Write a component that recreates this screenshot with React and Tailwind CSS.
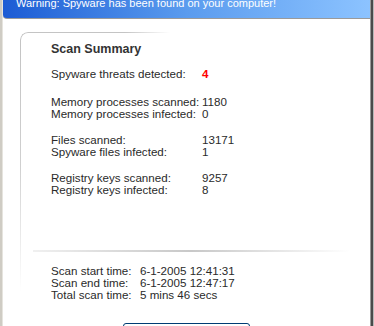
import React from "react";

const Row = ({ label, value, valueClass = "" }) => (
  <div className="flex h-[12px] leading-[12px] whitespace-nowrap">
    <span className="w-[151px] shrink-0">{label}</span>
    <span className={valueClass}>{value}</span>
  </div>
);

const TimeRow = ({ label, value }) => (
  <div className="flex h-[12px] leading-[12px] whitespace-nowrap">
    <span className="w-[89px] shrink-0">{label}</span>
    <span>{value}</span>
  </div>
);

const App = () => {
  return (
    <div
      className="w-[374px] h-[326px] overflow-hidden bg-white flex text-[11.6px] text-[#2a2a2a]"
      style={{ fontFamily: '"Liberation Sans", Arial, sans-serif' }}
    >
      {/* left frame */}
      <div className="w-[3px] h-full shrink-0 bg-[#cfccc4] border-r border-[#e6e4de]" />

      <div className="flex-1 min-w-0 flex flex-col">
        {/* warning banner */}
        <div className="h-[19px] shrink-0 rounded-bl-[4px] bg-linear-to-r from-[#1c5bd4] via-[#5a9bee] to-[#8cc3ff] border-b border-[#9a9a9a] overflow-hidden">
          <div className="pl-[13px] mt-[-3px] text-white text-[11px] leading-[13px] whitespace-nowrap">
            Warning: Spyware has been found on your computer!
          </div>
        </div>

        {/* scan summary panel */}
        <div className="flex-1 min-h-0 pt-[13px] pl-[17px]">
          <div className="relative h-full pt-[10px]">
            <div className="absolute left-0 top-0 w-[150px] h-[10px] rounded-tl-[8px] border-t border-l border-[#c4c4c4] [mask-image:linear-gradient(to_right,black_70%,transparent)]" />
            <div className="absolute left-0 top-[9px] w-[1px] h-[250px] bg-linear-to-b from-[#c4c4c4] via-[#d0d0d0] to-transparent" />

            <div className="pl-[31px]">
              <div className="font-bold text-[12.5px] leading-[14px] text-[#333]">
                Scan Summary
              </div>

              <div className="mt-[12px]">
                <Row
                  label="Spyware threats detected:"
                  value="4"
                  valueClass="text-[#ff0000] font-bold"
                />
              </div>

              <div className="mt-[16px]">
                <Row label="Memory processes scanned:" value="1180" />
                <Row label="Memory processes infected:" value="0" />
              </div>

              <div className="mt-[14px]">
                <Row label="Files scanned:" value="13171" />
                <Row label="Spyware files infected:" value="1" />
              </div>

              <div className="mt-[14px]">
                <Row label="Registry keys scanned:" value="9257" />
                <Row label="Registry keys infected:" value="8" />
              </div>
            </div>

            <div className="mt-[54px] ml-[13px] mr-[20px] h-[2px] bg-linear-to-r from-[#f0f0f0] via-[#c8c8c8] to-white" />

            <div className="pl-[31px] mt-[13px]">
              <TimeRow label="Scan start time:" value="6-1-2005 12:41:31" />
              <TimeRow label="Scan end time:" value="6-1-2005 12:47:17" />
              <TimeRow label="Total scan time:" value="5 mins 46 secs" />
            </div>

            <div className="ml-[103px] mt-[22px] w-[127px] h-[22px] rounded-[3px] border border-[#003c74] bg-linear-to-b from-white to-[#ecebe6]" />
          </div>
        </div>
      </div>

      {/* right frame */}
      <div className="w-[4px] h-full shrink-0 flex">
        <div className="w-[1px] bg-[#9a9a9a]" />
        <div className="w-[2px] bg-[#4a4a4a]" />
        <div className="w-[1px] bg-[#b8b8b8]" />
      </div>
    </div>
  );
};

export default App;
